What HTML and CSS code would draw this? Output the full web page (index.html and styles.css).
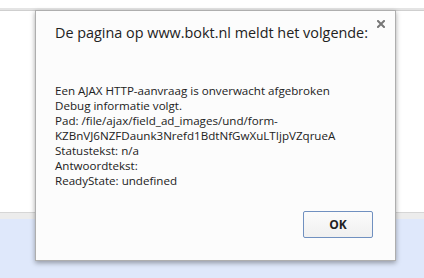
FILE: index.html
```html
<!DOCTYPE html>
<html>
<head>
<meta charset="utf-8">
<link rel="stylesheet" href="styles.css">
</head>
<body>
<div class="page">
  <div class="top-gap"></div>
  <div class="top-line"></div>
  <div class="content"></div>
  <div class="band"></div>
  <div class="blue"></div>
</div>
<div class="dialog">
  <div class="close">
    <svg width="8" height="8" viewBox="0 0 8 8"><path d="M1 1L7 7M7 1L1 7" stroke="#777777" stroke-width="2" stroke-linecap="square"/></svg>
  </div>
  <div class="title">De pagina op www.bokt.nl meldt het volgende:</div>
  <div class="message">Een AJAX HTTP-aanvraag is onverwacht afgebroken<br>Debug informatie volgt.<br>Pad: /file/ajax/field_ad_images/und/form-<br>KZBnVJ6NZFDaunk3Nrefd1BdtNfGwXuLTIjpVZqrueA<br>Statustekst: n/a<br>Antwoordtekst:<br>ReadyState: undefined</div>
  <div class="buttons">
    <button class="ok">OK</button>
  </div>
</div>
</body>
</html>
```
FILE: styles.css
```css
html, body {
  margin: 0;
  padding: 0;
}
body {
  width: 424px;
  height: 278px;
  overflow: hidden;
  background: #ffffff;
  font-family: "Open Sans", "Noto Sans", sans-serif;
  position: relative;
}
.page {
  display: flex;
  flex-direction: column;
  height: 278px;
}
.top-gap {
  height: 8px;
  background: #ffffff;
}
.top-line {
  height: 2px;
  background: #e4e4e4;
  border-bottom: 1px solid #cfcfcf;
}
.content {
  flex: 1;
  background: #ffffff;
}
.band {
  height: 6px;
  background: #ececec;
  border-top: 1px solid #d6d6d6;
}
.blue {
  height: 59px;
  background: #dfe8fb;
}
.dialog {
  position: absolute;
  left: 35px;
  top: 10px;
  width: 359px;
  height: 249px;
  background: #fcfcfc;
  border: 1px solid #aeaeae;
  box-shadow: 0 2px 5px rgba(0, 0, 0, 0.35);
  display: flex;
  flex-direction: column;
  box-sizing: content-box;
}
.close {
  position: absolute;
  right: 10px;
  top: 9px;
  width: 8px;
  height: 8px;
  display: flex;
}
.title {
  margin: 12px 0 0 19px;
  font-size: 14.4px;
  line-height: 20px;
  color: #222222;
  white-space: nowrap;
}
.message {
  margin: 40px 0 0 19px;
  font-size: 11.6px;
  line-height: 15px;
  color: #222222;
  white-space: nowrap;
}
.buttons {
  margin-top: auto;
  display: flex;
  justify-content: flex-end;
  padding: 0 22px 22px 0;
}
.ok {
  width: 70px;
  height: 27px;
  border: 1px solid #7090c0;
  border-radius: 2px;
  background: linear-gradient(#fbfbfb, #f0f0f0);
  font-family: "Open Sans", "Noto Sans", sans-serif;
  font-weight: bold;
  font-size: 12px;
  color: #222222;
  padding: 0;
}
```
